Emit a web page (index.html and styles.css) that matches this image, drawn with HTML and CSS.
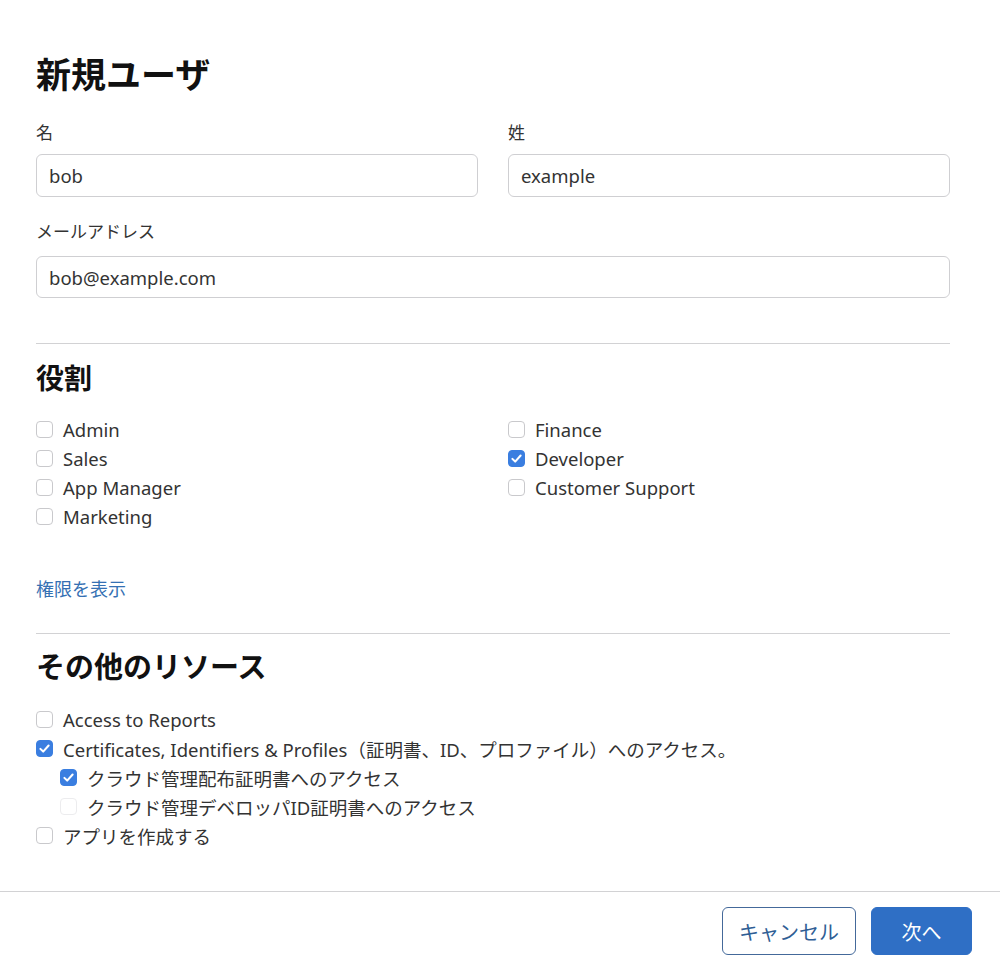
FILE: index.html
```html
<!DOCTYPE html>
<html lang="ja">
<head>
<meta charset="utf-8">
<title>新規ユーザ</title>
<link rel="stylesheet" href="styles.css">
</head>
<body>
<div class="page">
  <main class="content">
    <h1 class="title">新規ユーザ</h1>
    <div class="name-row">
      <div class="field">
        <label class="label">名</label>
        <div class="input">bob</div>
      </div>
      <div class="field">
        <label class="label">姓</label>
        <div class="input">example</div>
      </div>
    </div>
    <div class="field field-email">
      <label class="label">メールアドレス</label>
      <div class="input">bob@example.com</div>
    </div>

    <hr class="divider divider-roles">

    <h2 class="section-title">役割</h2>
    <div class="roles">
      <div class="col">
        <div class="check-row"><span class="box"></span><span>Admin</span></div>
        <div class="check-row"><span class="box"></span><span>Sales</span></div>
        <div class="check-row"><span class="box"></span><span>App Manager</span></div>
        <div class="check-row"><span class="box"></span><span>Marketing</span></div>
      </div>
      <div class="col">
        <div class="check-row"><span class="box"></span><span>Finance</span></div>
        <div class="check-row"><span class="box checked"><svg viewBox="0 0 16 16"><path d="M3.6 8.4 L6.6 11.3 L12.4 4.8" /></svg></span><span>Developer</span></div>
        <div class="check-row"><span class="box"></span><span>Customer Support</span></div>
      </div>
    </div>

    <a class="link">権限を表示</a>

    <hr class="divider divider-res">

    <h2 class="section-title section-title-lg">その他のリソース</h2>
    <div class="resources">
      <div class="check-row"><span class="box"></span><span>Access to Reports</span></div>
      <div class="check-row"><span class="box checked"><svg viewBox="0 0 16 16"><path d="M3.6 8.4 L6.6 11.3 L12.4 4.8" /></svg></span><span>Certificates, Identifiers &amp; Profiles（証明書、ID、プロファイル）へのアクセス。</span></div>
      <div class="check-row nested"><span class="box checked"><svg viewBox="0 0 16 16"><path d="M3.6 8.4 L6.6 11.3 L12.4 4.8" /></svg></span><span>クラウド管理配布証明書へのアクセス</span></div>
      <div class="check-row nested"><span class="box disabled"></span><span>クラウド管理デベロッパID証明書へのアクセス</span></div>
      <div class="check-row"><span class="box"></span><span>アプリを作成する</span></div>
    </div>
  </main>

  <footer class="footer">
    <button class="btn btn-secondary">キャンセル</button>
    <button class="btn btn-primary">次へ</button>
  </footer>
</div>
</body>
</html>
```

FILE: styles.css
```css
* { box-sizing: border-box; }

html, body {
  margin: 0;
  padding: 0;
  background: #ffffff;
}

body {
  font-family: "Noto Sans", "Noto Sans CJK JP", sans-serif;
  color: #333333;
  width: 1000px;
}

.content {
  padding: 53px 50px 0 36px;
}

.title {
  margin: 0;
  font-size: 35px;
  line-height: 40px;
  font-weight: 700;
  color: #111111;
  font-family: "Noto Sans CJK JP", sans-serif;
}

.name-row {
  display: grid;
  grid-template-columns: 1fr 1fr;
  column-gap: 30px;
  margin-top: 27px;
}

.field {
  display: flex;
  flex-direction: column;
}

.field-email {
  margin-top: 22px;
}

.field-email .label {
  margin-bottom: 13px;
}

.label {
  font-family: "Noto Sans CJK JP", sans-serif;
  font-size: 17px;
  line-height: 24px;
  color: #333333;
  margin-bottom: 10px;
}

.input {
  height: 43px;
  border: 1px solid #cfcfd2;
  border-radius: 6px;
  padding: 0 12px;
  display: flex;
  align-items: center;
  font-family: "Noto Sans", sans-serif;
  font-size: 18.5px;
  color: #333333;
}

.field-email .input {
  height: 42px;
}

.divider {
  border: 0;
  border-top: 1px solid #d2d2d4;
  margin: 0;
}

.divider-roles {
  margin-top: 45px;
}

.section-title {
  margin: 15px 0 0;
  font-family: "Noto Sans CJK JP", sans-serif;
  font-size: 28px;
  line-height: 36px;
  font-weight: 700;
  color: #111111;
}

.section-title-lg {
  margin-top: 12px;
  font-size: 29px;
  line-height: 38px;
}

.roles {
  display: grid;
  grid-template-columns: 1fr 1fr;
  column-gap: 30px;
  margin-top: 20px;
}

.col {
  display: flex;
  flex-direction: column;
}

.check-row {
  display: flex;
  align-items: center;
  height: 29px;
  font-size: 18.5px;
  color: #333333;
  gap: 10px;
}

.check-row.nested {
  padding-left: 24px;
}

.box {
  width: 17px;
  height: 17px;
  border: 1px solid #c9c9cc;
  border-radius: 4px;
  flex: 0 0 auto;
  display: flex;
  align-items: center;
  justify-content: center;
  background: #ffffff;
}

.box.checked {
  background: #3a7ee0;
  border-color: #3a7ee0;
}

.box.disabled {
  border-color: #ececee;
}

.box svg {
  width: 15px;
  height: 15px;
}

.box svg path {
  fill: none;
  stroke: #ffffff;
  stroke-width: 2.2;
  stroke-linecap: round;
  stroke-linejoin: round;
}

.link {
  display: block;
  margin-top: 45px;
  font-family: "Noto Sans CJK JP", sans-serif;
  font-size: 18px;
  line-height: 24px;
  color: #3570b3;
  cursor: pointer;
}

.divider-res {
  margin-top: 33px;
}

.resources {
  margin-top: 21px;
  display: flex;
  flex-direction: column;
}

.footer {
  margin-top: 41px;
  border-top: 1px solid #d2d2d4;
  display: flex;
  justify-content: flex-end;
  gap: 15px;
  padding: 15px 28px 0 0;
}

.btn {
  height: 48px;
  border-radius: 6px;
  font-family: "Noto Sans CJK JP", sans-serif;
  font-size: 20px;
  cursor: pointer;
}

.btn-secondary {
  width: 134px;
  background: #ffffff;
  border: 1px solid #44699a;
  color: #2f5e95;
}

.btn-primary {
  width: 101px;
  background: #2f6fc5;
  border: 1px solid #2f6fc5;
  color: #ffffff;
}
```
